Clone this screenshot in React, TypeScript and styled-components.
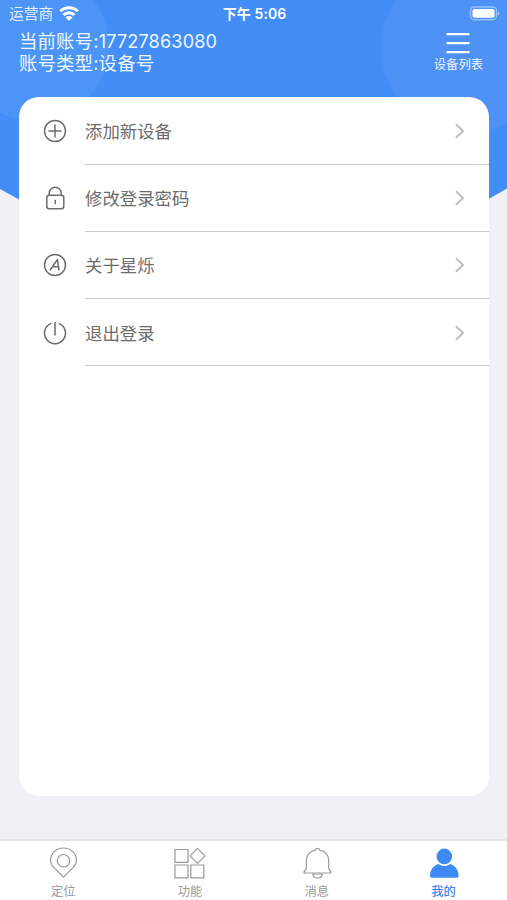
import React from "react";
import styled, { createGlobalStyle } from "styled-components";

const GlobalStyle = createGlobalStyle`
  * { box-sizing: border-box; }
  body { margin: 0; font-family: Inter, "Noto Sans CJK SC", sans-serif; }
`;

const Screen = styled.div`
  position: relative;
  isolation: isolate;
  display: flex;
  flex-direction: column;
  width: 507px;
  height: 900px;
  overflow: hidden;
  background: #f0f0f5;
`;

const Backdrop = styled.div`
  position: absolute;
  inset: 0 0 auto;
  z-index: -1;
  height: 330px;
  background:
    radial-gradient(circle at 34px 46px, #4c95f6 74.5px, transparent 75.5px),
    radial-gradient(circle at 466px 48px, #4f92f5 84.5px, transparent 85.5px),
    #438df7;
  clip-path: polygon(0 0, 100% 0, 100% 188.5px, 487px 200px, 20px 200px, 0 189px);
`;

const StatusBar = styled.div`
  display: grid;
  grid-template-columns: 1fr auto 1fr;
  align-items: center;
  height: 28px;
  padding: 0 7px 0 9px;
  color: #fff;
  font-size: 14.7px;
  line-height: 28px;
`;

const Carrier = styled.div`
  display: flex;
  align-items: center;
  gap: 6px;
  color: #e2eeff;
`;

const Clock = styled.div`
  font-size: 14px;
  font-weight: 600;
  letter-spacing: 0.1px;
`;

const BatterySlot = styled.div`
  display: flex;
  justify-content: flex-end;
`;

const Header = styled.header`
  display: flex;
  justify-content: space-between;
  height: 69px;
  padding: 3px 24px 0 19px;
  color: #edf5ff;
`;

const Account = styled.div`
  font-size: 18.4px;
  line-height: 21.6px;
  letter-spacing: 0.15px;
`;

const AccountNumber = styled.span`
  font-size: 18.1px;
`;

const DeviceButton = styled.div`
  display: flex;
  flex-direction: column;
  align-items: center;
  gap: 3px;
  padding-top: 1px;
  font-size: 12.3px;
  line-height: 15px;
`;

const Card = styled.main`
  height: 699px;
  margin: 0 18px 0 19px;
  overflow: hidden;
  background: #fff;
  border-radius: 20px;
`;

const Row = styled.div`
  display: flex;
  align-items: center;
  height: 67.2px;
  padding-left: 24px;

  &:first-child { height: 67.6px; }
`;

const RowBody = styled.div`
  display: flex;
  flex: 1;
  align-items: center;
  justify-content: space-between;
  height: 100%;
  margin-left: 18px;
  padding-right: 23px;
  color: #6c6c6c;
  font-size: 17.4px;
  border-bottom: 1.5px solid #cbcbcb;
`;

const TabBar = styled.nav`
  display: grid;
  grid-template-columns: repeat(4, 1fr);
  height: 61px;
  margin-top: auto;
  background: #fff;
  border-top: 2px solid #e3e3e6;
`;

const Tab = styled.div<{ $active?: boolean }>`
  display: flex;
  flex-direction: column;
  align-items: center;
  padding-top: 6px;
  color: ${(p) => (p.$active ? "#3f89f4" : "#999")};
  font-size: 12.3px;
  font-weight: ${(p) => (p.$active ? 500 : 400)};
  line-height: 16px;
  gap: 5px;
`;

const Icon = styled.svg`
  display: block;
  flex: none;
  fill: none;
  stroke: currentColor;
  stroke-linejoin: round;
`;

const RowIcon = styled(Icon)`
  color: #6c6c6c;
  stroke-width: 1.5;
`;

const ChevronIcon = styled(Icon)`
  margin-top: 1px;
  color: #c0c0c0;
  stroke-width: 2.1;
`;

const StatusIcon = styled(Icon)`
  color: #fff;
`;

const rows = [
  {
    label: "添加新设备",
    art: <><circle cx="12" cy="12" r="10.5" /><path d="M12 5.500v13M5.500 12h13" /></>,
  },
  {
    label: "修改登录密码",
    art: <><rect x="3.8" y="9.3" width="17" height="13.500" rx="2.500" /><path d="M6.2 9.300V7.300a6 6 0 0 1 12 0v2M12.300 13.800v4.500" /></>,
  },
  {
    label: "关于星烁",
    art: <><circle cx="12" cy="12" r="10.5" /><path d="m7 17.300 7.500-10.800L16 17.300M9.500 13.700h6" /></>,
  },
  {
    label: "退出登录",
    art: <><path d="M8.2 2.400a10.5 10.5 0 1 0 7.600 0M12 1v13.400" /></>,
  },
];

const tabs = [
  {
    label: "定位",
    art: <><path d="M16.500 30.200 7.500 21.200C4.700 18.400 3.500 16 3.500 13.200a13 12.2 0 0 1 26 0c0 2.800-1.200 5.200-4 8Z" /><circle cx="16.500" cy="13.700" r="6.2" /></>,
  },
  {
    label: "功能",
    art: <path d="M1 2.500h13v12.800H1ZM1 18h13v12.800H1ZM16.800 18h13v12.800h-13ZM23.500 1.300l7.400 7.500-7.400 7.500-7.400-7.500Z" />,
  },
  {
    label: "消息",
    art: <><path d="M16.500 1.300c1.200 0 2 .7 2.200 1.800 5.500 1.200 9 5 9 10.300v7.100c0 1.700.7 2.800 2 4 .7.700.3 1.500-.6 1.500H3.900c-.9 0-1.300-.8-.6-1.500 1.300-1.200 2-2.300 2-4v-7.100c0-5.300 3.500-9.100 9-10.300.2-1.100 1-1.800 2.200-1.800Z" /><path d="M11.700 27h9.600c-.2 2.600-2 4-4.800 4s-4.600-1.400-4.800-4Z" /></>,
  },
  {
    label: "我的",
    active: true,
    art: <g fill="currentColor" stroke="none"><circle cx="16.300" cy="9.400" r="7.800" /><path d="M10.300 17q6 4.200 12 0c4.800 1.600 8.300 6.200 8.300 11.500 0 1.600-.8 2.300-2.300 2.300h-24c-1.500 0-2.300-.7-2.300-2.300 0-5.300 3.500-9.900 8.300-11.500Z" /></g>,
  },
];

export default function App() {
  return (
    <>
      <GlobalStyle />
      <Screen>
        <Backdrop />
        <StatusBar>
          <Carrier>
            运营商
            <StatusIcon width="20" height="16" viewBox="0 0 20 16" strokeWidth="2.900">
              <path d="M1.200 5.300a12.500 12.500 0 0 1 17.600 0M4.500 9a7.800 7.800 0 0 1 11 0" />
              <path d="M10 15 6.500 11.500a4.900 4.900 0 0 1 7 0Z" fill="#fff" strokeWidth="0" />
            </StatusIcon>
          </Carrier>
          <Clock>下午 5:06</Clock>
          <BatterySlot>
            <StatusIcon width="31" height="16" viewBox="0 0 31 16" strokeWidth="0">
              <rect x="1.500" y="0.900" width="26" height="12.800" rx="4" stroke="#96c0fa" strokeWidth="1.500" />
              <rect x="3.500" y="2.900" width="22" height="8.800" rx="2" fill="#fff" />
              <path d="M28.800 5.500v4q3-2 0-4Z" fill="#a4c8fb" />
            </StatusIcon>
          </BatterySlot>
        </StatusBar>
        <Header>
          <Account>
            <div>当前账号:<AccountNumber>17727863080</AccountNumber></div>
            <div>账号类型:设备号</div>
          </Account>
          <DeviceButton>
            <StatusIcon width="24" height="22" viewBox="0 0 24 22" strokeWidth="2.300">
              <path d="M.5 2.200h23M.5 11.200h23M.5 20.200h23" />
            </StatusIcon>
            设备列表
          </DeviceButton>
        </Header>
        <Card>
          {rows.map((row) => (
            <Row key={row.label}>
              <RowIcon width="24" height="24" viewBox="0 0 24 24">{row.art}</RowIcon>
              <RowBody>
                {row.label}
                <ChevronIcon width="12" height="18" viewBox="0 0 12 18">
                  <path d="M2 2.300 9 9l-7 6.700" />
                </ChevronIcon>
              </RowBody>
            </Row>
          ))}
        </Card>
        <TabBar>
          {tabs.map((tab) => (
            <Tab key={tab.label} $active={tab.active}>
              <Icon width="32" height="32" viewBox="0 0 32 32" strokeWidth="1.200">{tab.art}</Icon>
              {tab.label}
            </Tab>
          ))}
        </TabBar>
      </Screen>
    </>
  );
}
